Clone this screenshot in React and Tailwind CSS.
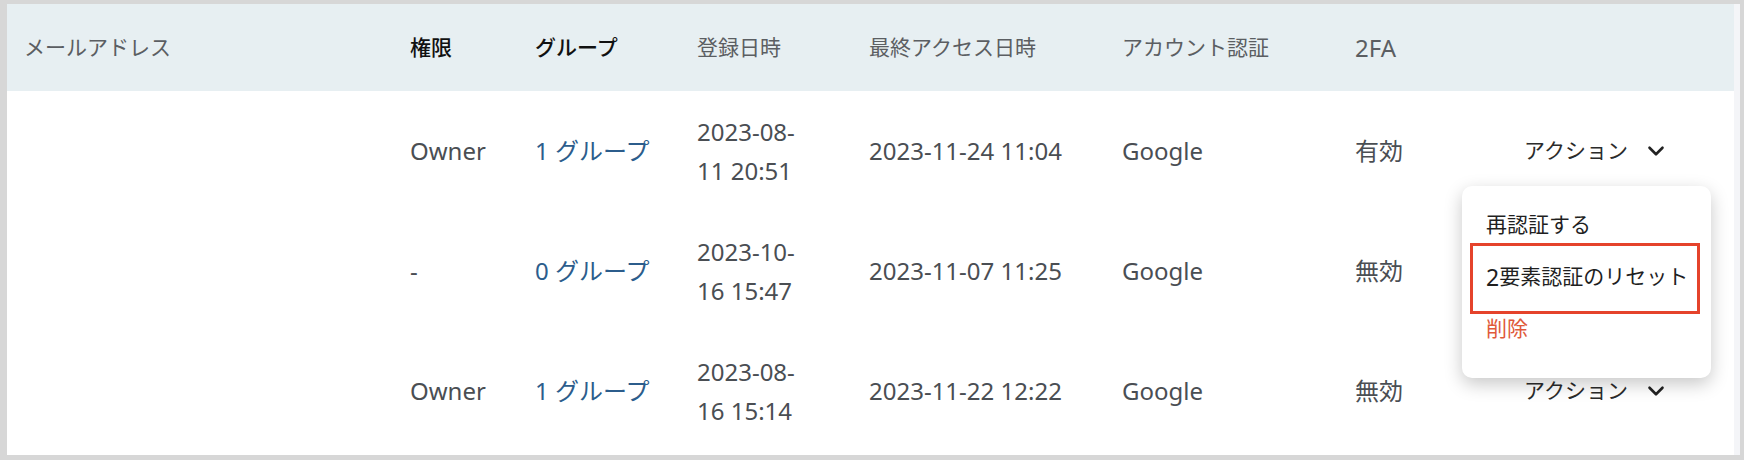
import { ChevronDown } from "lucide-react";

const cols =
  "grid grid-cols-[386px_125px_162px_172px_253px_233px_169px_1fr] items-center pl-[17px]";

const users = [
  { role: "Owner", groups: 1, created: ["2023-08-", "11 20:51"], last: "2023-11-24 11:04", auth: "Google", tfa: "有効" },
  { role: "-", groups: 0, created: ["2023-10-", "16 15:47"], last: "2023-11-07 11:25", auth: "Google", tfa: "無効" },
  { role: "Owner", groups: 1, created: ["2023-08-", "16 15:14"], last: "2023-11-22 12:22", auth: "Google", tfa: "無効" },
];

const ActionButton = () => (
  <button className="flex items-center gap-[15px] text-[21px] text-[#2b2b2b]">
    <span>アクション</span>
    <ChevronDown size={26} strokeWidth={2.4} className="text-[#222]" />
  </button>
);

const App = () => {
  return (
    <div
      className="h-[460px] w-[1744px] bg-[#d7d7d7] pt-[4px] pl-[7px] pr-[4px] pb-[5px] text-[21px]"
      style={{ fontFamily: '"Noto Sans", "Noto Sans CJK JP", sans-serif' }}
    >
      <div className="relative flex h-full bg-white">
        <div className="flex-1">
          {/* Header */}
          <div className={`${cols} h-[87px] bg-[#e7eff2] text-[#5b5e62]`}>
            <div>メールアドレス</div>
            <div className="font-medium text-[#111]">権限</div>
            <div className="font-medium text-[#111]">グループ</div>
            <div>登録日時</div>
            <div>最終アクセス日時</div>
            <div>アカウント認証</div>
            <div className="text-[24px]">2FA</div>
            <div />
          </div>

          {/* Rows */}
          {users.map((u, i) => (
            <div key={i} className={`${cols} h-[120px] text-[24px] text-[#4a4e53]`}>
              <div />
              <div>{u.role}</div>
              <div className="text-[#2c5d8c]">{u.groups} グループ</div>
              <div className="leading-[39px]">
                <div>{u.created[0]}</div>
                <div>{u.created[1]}</div>
              </div>
              <div>{u.last}</div>
              <div>{u.auth}</div>
              <div>{u.tfa}</div>
              <div>
                <ActionButton />
              </div>
            </div>
          ))}
        </div>

        {/* Scrollbar track */}
        <div className="w-[6px] bg-[#f4f5f8]" />

        {/* Dropdown menu */}
        <div className="absolute left-[1455px] top-[182px] h-[192px] w-[249px] rounded-[10px] bg-white pt-[13px] shadow-[0_6px_18px_rgba(0,0,0,0.22)]">
          <div className="flex h-[52px] items-center pl-[24px] text-[#1f1f1f]">再認証する</div>
          <div className="flex h-[52px] items-center pl-[24px] text-[#1f1f1f]">
            <span className="text-[23px]">2</span>要素認証のリセット
          </div>
          <div className="flex h-[52px] items-center pl-[24px] text-[#e0593a]">削除</div>
          <div className="absolute left-[8px] top-[57px] h-[71px] w-[230px] border-[3px] border-[#e5432b]" />
        </div>
      </div>
    </div>
  );
};

export default App;
